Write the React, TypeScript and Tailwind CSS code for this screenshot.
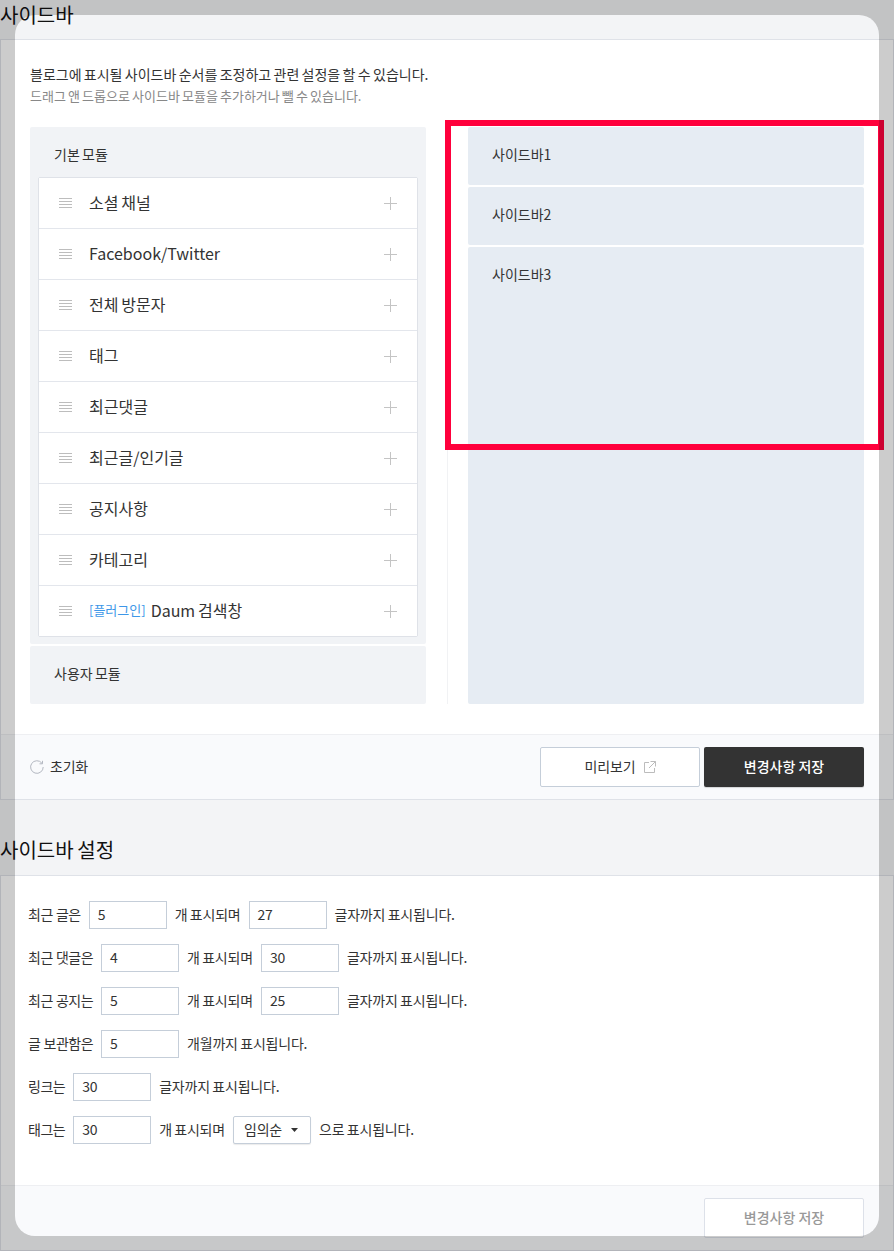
const modules = ["소셜 채널", "Facebook/Twitter", "전체 방문자", "태그", "최근댓글", "최근글/인기글", "공지사항", "카테고리"];

function Handle() {
  return (
    <svg width="13" height="11" viewBox="0 0 13 11" className="shrink-0" fill="none" stroke="#bdbdbd" strokeWidth="1">
      <path d="M0 .5h13M0 3.5h13M0 6.5h13M0 9.5h13" />
    </svg>
  );
}

function Plus() {
  return (
    <svg width="13" height="13" viewBox="0 0 13 13" className="shrink-0" fill="none" stroke="#c4c4c4" strokeWidth="1">
      <path d="M0 6.5h13M6.5 0v13" />
    </svg>
  );
}

function Row({ children, last }: { children: React.ReactNode; last?: boolean }) {
  return (
    <div className={"flex items-center bg-white pl-[20px] pr-[20px] " + (last ? "h-[50px]" : "h-[51px] border-b border-[#e3e6ec]")}>
      <Handle />
      <div className="ml-[17px] flex flex-1 items-center pb-[2px] text-[16px] text-[#333]">{children}</div>
      <Plus />
    </div>
  );
}

function Num({ value, w = "w-[78px]" }: { value: string; w?: string }) {
  return (
    <span className={"mx-2 inline-flex h-[28px] items-center border border-[#c5ced9] bg-white pb-[2px] pl-[8px] text-[14px] text-[#333] " + w}>{value}</span>
  );
}

function Line({ children }: { children: React.ReactNode }) {
  return <div className="flex h-[28px] items-center text-[14px] leading-[26px] tracking-[-0.2px] text-[#333] [word-spacing:-0.5px]">{children}</div>;
}

function Label({ children }: { children: React.ReactNode }) {
  return <span className="-translate-y-px">{children}</span>;
}

function Lead({ children }: { children: React.ReactNode }) {
  return <span className="w-auto -translate-y-px tracking-[-0.5px] [word-spacing:0.5px]">{children}</span>;
}

function SideBlock({ label, className }: { label: string; className: string }) {
  return (
    <div className={"rounded-[2px] bg-[#e6ecf3] pl-[24px] pt-[17px] text-[14px] leading-[20px] text-[#333] " + className}>{label}</div>
  );
}

export default function App() {
  return (
    <div
      className="relative h-[1251px] w-[894px] overflow-hidden bg-[#f3f4f6] text-[#333] [word-spacing:-0.8px]"
      style={{ fontFamily: '"Noto Sans CJK KR", "Noto Sans", sans-serif' }}
    >
      <h2 className="h-[39px] text-[20px] font-normal leading-[30px] text-[#111]">사이드바</h2>
      <section className="h-[761px] border border-[#dfe2e8] bg-white">
        <div className="h-[694px] px-[29px] pt-[24px]">
          <p className="text-[14px] leading-[20px] text-[#333]">블로그에 표시될 사이드바 순서를 조정하고 관련 설정을 할 수 있습니다.</p>
          <p className="mt-[2px] text-[13px] leading-[20px] text-[#888]">드래그 앤 드롭으로 사이드바 모듈을 추가하거나 뺄 수 있습니다.</p>
          <div className="mt-[21px] flex h-[577px]">
            <div className="flex w-[396px] flex-col gap-[2px]">
              <div className="h-[517px] rounded-[2px] bg-[#f1f3f6] px-[8px]">
                <div className="h-[50px] pl-[16px] pt-[17px] text-[14px] leading-[20px] text-[#333]">기본 모듈</div>
                <div className="rounded-[2px] border border-[#dfe2e8]">
                  {modules.map((m) => (
                    <Row key={m}>{m}</Row>
                  ))}
                  <Row last>
                    <span className="mr-[5px] text-[13px] text-[#3d97e8]">[플러그인]</span>
                    Daum 검색창
                  </Row>
                </div>
              </div>
              <div className="flex-1 rounded-[2px] bg-[#f1f3f6] pl-[24px] pt-[17px] text-[14px] leading-[20px] text-[#333]">사용자 모듈</div>
            </div>
            <div className="ml-[21px] w-px bg-[#f1f2f4]" />
            <div className="ml-[20px] flex w-[396px] flex-col gap-[2px]">
              <SideBlock label="사이드바1" className="h-[58px]" />
              <SideBlock label="사이드바2" className="h-[58px]" />
              <SideBlock label="사이드바3" className="flex-1" />
            </div>
          </div>
        </div>
        <div className="flex h-[65px] items-center border-t border-[#eeeff2] bg-[#f9fafc] pl-[29px] pr-[29px]">
          <svg width="14" height="14" viewBox="0 0 14 14" fill="none" strokeWidth="1" className="shrink-0">
            <path d="M11.9 3.2A6.3 6.3 0 1 0 13.2 7" stroke="#b3b7c0" />
            <path d="M12.5 0.8v3h-3" stroke="#b3b7c0" />
          </svg>
          <span className="ml-[6px] pb-[2px] text-[14px] tracking-[-0.2px] text-[#333]">초기화</span>
          <div className="ml-auto flex gap-[4px]">
            <button className="flex h-[40px] w-[160px] items-center justify-center gap-[8px] rounded-[2px] border border-[#c5ced9] bg-white text-[14px] text-[#333]">
              <span className="pb-[2px] tracking-[-0.1px]">미리보기</span>
              <svg width="12" height="12" viewBox="0 0 12 12" fill="none" stroke="#bcbcbc" strokeWidth="1">
                <path d="M5 1.5H.5v10h10V7M6.5.5h5v5M11.5.5 5 7" />
              </svg>
            </button>
            <button className="h-[40px] w-[160px] rounded-[2px] bg-[#333] pb-[2px] text-[14px] font-medium text-white shadow-[0_1px_1px_rgba(0,0,0,0.15)]">변경사항 저장</button>
          </div>
        </div>
      </section>
      <h2 className="flex h-[75px] items-end pb-[10px] text-[20px] font-normal leading-[31px] text-[#111]">사이드바 설정</h2>
      <section className="h-[376px] border border-[#dfe2e8] bg-white">
        <div className="flex h-[309px] flex-col gap-[15px] pl-[27px] pt-[25px]">
          <Line><Lead>최근 글은</Lead><Num value="5" /><Label>개 표시되며</Label><Num value="27" /><Label>글자까지 표시됩니다.</Label></Line>
          <Line><Lead>최근 댓글은</Lead><Num value="4" /><Label>개 표시되며</Label><Num value="30" /><Label>글자까지 표시됩니다.</Label></Line>
          <Line><Lead>최근 공지는</Lead><Num value="5" /><Label>개 표시되며</Label><Num value="25" /><Label>글자까지 표시됩니다.</Label></Line>
          <Line><Lead>글 보관함은</Lead><Num value="5" /><Label>개월까지 표시됩니다.</Label></Line>
          <Line><Lead>링크는</Lead><Num value="30" /><Label>글자까지 표시됩니다.</Label></Line>
          <Line>
            <Lead>태그는</Lead><Num value="30" /><Label>개 표시되며</Label>
            <span className="mx-2 inline-flex h-[28px] w-[78px] items-center rounded-[2px] border border-[#c5ced9] bg-white pb-[2px] pl-[10px] text-[14px] shadow-[0_1px_1px_rgba(0,0,0,0.08)]">
              임의순
              <svg width="7" height="4" viewBox="0 0 7 4" className="ml-[9px] mt-[2px]"><path d="M0 0h7L3.5 4z" fill="#333" /></svg>
            </span>
            <Label>으로 표시됩니다.</Label>
          </Line>
        </div>
        <div className="flex h-[65px] justify-end border-t border-[#eeeff2] bg-[#f9fafc] pr-[29px] pt-[12px]">
          <button className="h-[40px] w-[160px] rounded-[2px] border border-[#dde1e9] bg-white pb-[2px] text-[14px] font-medium text-[#999]">변경사항 저장</button>
        </div>
      </section>
      <div className="pointer-events-none absolute left-[445px] top-[120px] h-[330px] w-[439px] border-[6px] border-[#ff003c]" />
      <div className="pointer-events-none absolute left-[15px] top-[15px] h-[1221px] w-[864px] rounded-[20px] shadow-[0_0_0_1000px_rgba(0,0,0,0.2)]" />
    </div>
  );
}
